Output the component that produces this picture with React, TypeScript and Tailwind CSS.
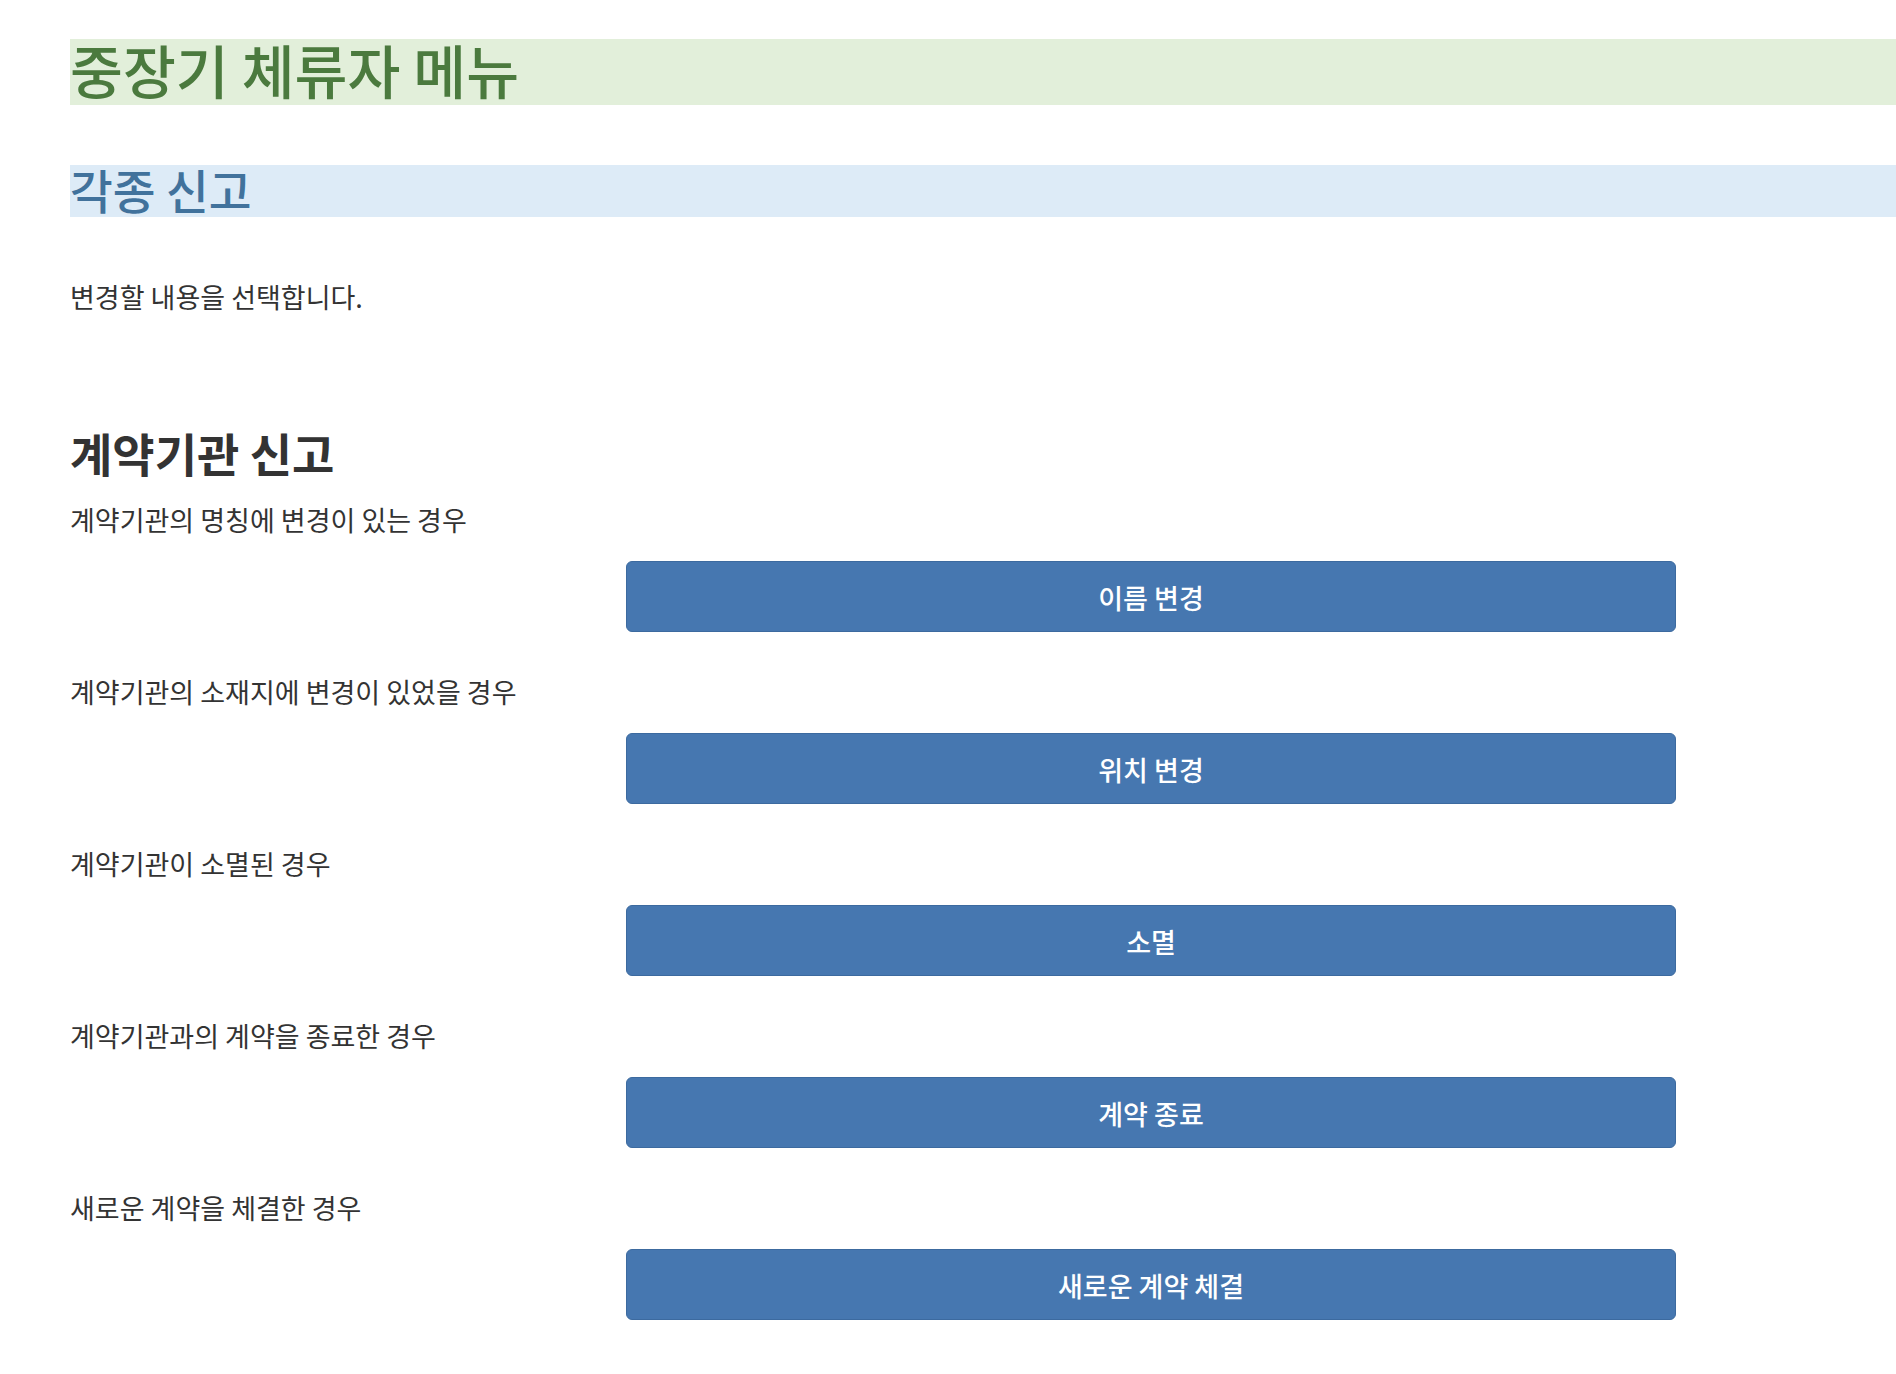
const FONT = "font-['Noto_Sans_CJK_KR','Noto_Sans',sans-serif]";

const REPORTS = [
  { desc: "계약기관의 명칭에 변경이 있는 경우", label: "이름 변경" },
  { desc: "계약기관의 소재지에 변경이 있었을 경우", label: "위치 변경" },
  { desc: "계약기관이 소멸된 경우", label: "소멸" },
  { desc: "계약기관과의 계약을 종료한 경우", label: "계약 종료" },
  { desc: "새로운 계약을 체결한 경우", label: "새로운 계약 체결" },
];

export default function App() {
  return (
    <div className={`${FONT} min-h-screen bg-white pl-[70px] pt-[39px] pb-[52px] text-[#333333]`}>
      <h1 className="flex h-[66px] items-center bg-[#e2efda] pb-[4px] text-[57.5px] font-medium leading-none text-[#4b7a3e]">
        중장기 체류자 메뉴
      </h1>

      <h2 className="mt-[60px] flex h-[52px] items-center bg-[#ddebf7] pb-[4px] text-[46.5px] font-medium leading-none text-[#41729c]">
        각종 신고
      </h2>

      <p className="mt-[65px] h-[30px] text-[27px] leading-[30px]">변경할 내용을 선택합니다.</p>

      <h3 className="mt-[117px] h-[46px] text-[46px] font-bold leading-[46px]">계약기관 신고</h3>

      <div className="mt-[30px] flex flex-col gap-[45px]">
        {REPORTS.map((r) => (
          <div key={r.label} className="flex flex-col gap-[26px]">
            <p className="h-[30px] text-[27px] leading-[30px]">{r.desc}</p>
            <button
              type="button"
              className="ml-[556px] flex h-[71px] w-[1050px] items-center justify-center rounded-[6px] border border-[#3c6a9f] bg-[#4677b0] pt-[3px] text-[27px] font-medium text-white"
            >
              {r.label}
            </button>
          </div>
        ))}
      </div>
    </div>
  );
}
